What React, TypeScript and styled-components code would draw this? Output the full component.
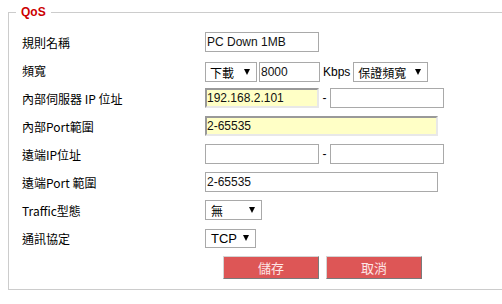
import styled, { createGlobalStyle } from "styled-components";

const GlobalStyle = createGlobalStyle`
  html, body {
    margin: 0;
    background: #fff;
    overflow: hidden;
  }
`;

const rows: { label: string }[] = [
  { label: "規則名稱" },
  { label: "頻寬" },
  { label: "內部伺服器 IP 位址" },
  { label: "內部Port範圍" },
  { label: "遠端IP位址" },
  { label: "遠端Port 範圍" },
  { label: "Traffic型態" },
  { label: "通訊協定" },
];

export default function App() {
  return (
    <Page>
      <GlobalStyle />
      <Fieldset>
        <Legend>QoS</Legend>
        <Form>
          <Label>{rows[0].label}</Label>
          <Controls>
            <Input $w={114} value="PC Down 1MB" readOnly />
          </Controls>

          <Label>{rows[1].label}</Label>
          <Controls $shift>
            <Select $w={52}>
              <span>下載</span>
              <Arrow />
            </Select>
            <Input $w={61} value="8000" readOnly style={{ marginLeft: 2 }} />
            <Unit>Kbps</Unit>
            <Select $w={75}>
              <span>保證頻寬</span>
              <Arrow />
            </Select>
          </Controls>

          <Label>{rows[2].label}</Label>
          <Controls>
            <Input $w={114} $hl value="192.168.2.101" readOnly />
            <Dash>-</Dash>
            <Input $w={114} value="" readOnly />
          </Controls>

          <Label>{rows[3].label}</Label>
          <Controls>
            <Input $w={233} $hl value="2-65535" readOnly />
          </Controls>

          <Label>{rows[4].label}</Label>
          <Controls>
            <Input $w={114} value="" readOnly />
            <Dash>-</Dash>
            <Input $w={114} value="" readOnly />
          </Controls>

          <Label>{rows[5].label}</Label>
          <Controls>
            <Input $w={233} value="2-65535" readOnly />
          </Controls>

          <Label>{rows[6].label}</Label>
          <Controls>
            <Select $w={57} $pl={5}>
              <span>無</span>
              <Arrow />
            </Select>
          </Controls>

          <Label>{rows[7].label}</Label>
          <Controls>
            <Select $w={51} $h={19} $pl={5} $latin>
              <span>TCP</span>
              <Arrow />
            </Select>
          </Controls>

          <Buttons>
            <Button>儲存</Button>
            <Button>取消</Button>
          </Buttons>
        </Form>
      </Fieldset>
    </Page>
  );
}

const Page = styled.div`
  padding: 4px 0 0 8px;
`;

const Fieldset = styled.fieldset`
  margin: 0;
  min-width: 0;
  border: 1px solid #cccccc;
  border-right: none;
  padding: 0 0 9px 7px;
`;

const Legend = styled.legend`
  padding: 0 5px;
  color: #cc0000;
  font-family: "Liberation Sans", Arial, sans-serif;
  font-weight: bold;
  font-size: 12px;
  line-height: 16px;
`;

const Form = styled.div`
  display: grid;
  grid-template-columns: 183px 1fr;
  grid-auto-rows: 28px;
  margin-top: 8px;
  padding-left: 6px;
`;

const Label = styled.div`
  display: flex;
  align-items: center;
  font-family: "Noto Sans CJK TC", "Liberation Sans", sans-serif;
  font-size: 12px;
  color: #000;
  white-space: pre;
`;

const Controls = styled.div<{ $shift?: boolean }>`
  display: flex;
  align-items: center;
  box-sizing: border-box;
  padding-top: ${(p) => (p.$shift ? "4px" : "0")};
`;

const Input = styled.input<{ $w: number; $hl?: boolean }>`
  box-sizing: border-box;
  width: ${(p) => p.$w}px;
  height: 20px;
  margin: 0;
  padding: 0 1px;
  font-family: "Liberation Sans", Arial, sans-serif;
  font-size: 12px;
  color: #111;
  background: ${(p) => (p.$hl ? "#ffffc6" : "#fff")};
  border: ${(p) => (p.$hl ? "2px solid" : "1px solid #a9a9a9")};
  border-color: ${(p) => (p.$hl ? "#999 #e8e8e8 #e8e8e8 #999" : "#a9a9a9")};
  padding-left: ${(p) => (p.$hl ? "0" : "1px")};
  outline: none;
`;

const Select = styled.div<{ $w: number; $h?: number; $pl?: number; $latin?: boolean }>`
  box-sizing: border-box;
  width: ${(p) => p.$w}px;
  height: ${(p) => p.$h ?? 20}px;
  display: flex;
  align-items: center;
  justify-content: space-between;
  padding: 0 6px 0 ${(p) => p.$pl ?? 4}px;
  border: 1px solid #a9a9a9;
  background: #fff;
  font-family: ${(p) =>
    p.$latin
      ? `"Liberation Sans", Arial, sans-serif`
      : `"Noto Sans CJK TC", "Liberation Sans", sans-serif`};
  font-size: ${(p) => (p.$latin ? "13px" : "12px")};
  color: #000;
`;

const Arrow = styled.span`
  width: 0;
  height: 0;
  border-left: 3px solid transparent;
  border-right: 3px solid transparent;
  border-top: 6px solid #000;
`;

const Unit = styled.span`
  margin: 0 3px;
  font-family: "Liberation Sans", Arial, sans-serif;
  font-size: 12px;
  color: #000;
`;

const Dash = styled.span`
  width: 11px;
  text-align: center;
  font-family: "Liberation Sans", Arial, sans-serif;
  font-size: 12px;
  color: #000;
`;

const Buttons = styled.div`
  grid-column: 2;
  display: flex;
  align-items: center;
  gap: 7px;
  padding: 3px 0 0 18px;
`;

const Button = styled.button`
  box-sizing: border-box;
  width: 96px;
  height: 23px;
  margin: 0;
  padding: 0;
  background: #dd5656;
  border: 1px solid;
  border-color: #d4d4d4 #7a7a7a #7a7a7a #d4d4d4;
  color: #fde6e6;
  font-family: "Noto Sans CJK TC", sans-serif;
  font-size: 13px;
`;
